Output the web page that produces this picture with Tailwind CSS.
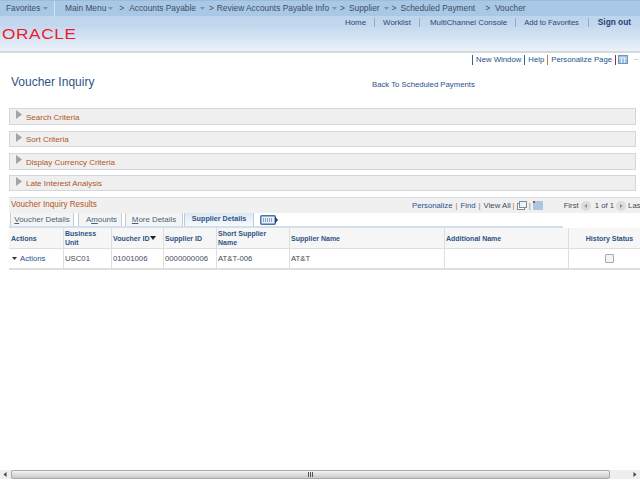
<!DOCTYPE html>
<html lang="en">
<head>
<meta charset="UTF-8" />
<title>Voucher Inquiry</title>
<script src="https://cdn.jsdelivr.net/npm/@tailwindcss/browser@4"></script>
</head>
<body class="w-[640px] h-[480px] overflow-hidden bg-white font-['Liberation_Sans',Arial,sans-serif] text-[7.75px] text-[#3f4a5a]">
<div class="flex flex-col h-[480px] w-[640px] overflow-hidden">

  <!-- header -->
  <header class="h-[53px] shrink-0 border-b-2 border-[#d5d8dd] bg-gradient-to-b from-[#b5cfe9] via-[#c3d8ee] to-[#eaf1f9]">
    <nav class="h-[16px] flex items-center whitespace-nowrap text-[#3d4f66] bg-[#a9c8e6] border-t border-[#9dbcdc] text-[8.35px]">
      <span class="w-[54px] pl-[6px] flex items-center">Favorites<svg width="5" height="3" viewBox="0 0 5 3" class="ml-[3px]"><path d="M0 0H5L2.500 3Z" fill="#7f94ab" /></svg></span>
      <span class="w-[1px] h-[16px] bg-[#d6e4f2]"></span>
      <span class="ml-[10px]">Main Menu</span><svg width="5" height="3" viewBox="0 0 5 3" class="ml-[2px]"><path d="M0 0H5L2.500 3Z" fill="#7f94ab" /></svg>
      <span class="ml-[6px] mr-[5px]">&gt;</span><span>Accounts Payable</span>
      <svg width="5" height="3" viewBox="0 0 5 3" class="ml-[4px]"><path d="M0 0H5L2.500 3Z" fill="#7f94ab" /></svg>
      <span class="ml-[4px] mr-[3px]">&gt;</span><span>Review Accounts Payable Info</span>
      <svg width="5" height="3" viewBox="0 0 5 3" class="ml-[3px]"><path d="M0 0H5L2.500 3Z" fill="#7f94ab" /></svg>
      <span class="ml-[3px] mr-[4px]">&gt;</span><span>Supplier</span>
      <svg width="5" height="3" viewBox="0 0 5 3" class="ml-[4px]"><path d="M0 0H5L2.500 3Z" fill="#7f94ab" /></svg>
      <span class="ml-[3px] mr-[4px]">&gt;</span><span>Scheduled Payment</span>
      <span class="ml-[10px] mr-[5px]">&gt;</span><span>Voucher</span>
    </nav>
    <div class="relative h-[34px]">
      <div class="flex justify-end items-center h-[13px] pr-[9px] text-[#28486f] text-[7.9px]">
        <span>Home</span>
        <span class="w-[1px] h-[9px] bg-[#93a9c0] mx-[8px]"></span>
        <span>Worklist</span>
        <span class="w-[1px] h-[9px] bg-[#93a9c0] ml-[8px] mr-[10px]"></span>
        <span>MultiChannel Console</span>
        <span class="w-[1px] h-[9px] bg-[#93a9c0] mx-[8px]"></span>
        <span class="text-[7.5px]">Add to Favorites</span>
        <span class="w-[1px] h-[9px] bg-[#93a9c0] mx-[9px]"></span>
        <span class="font-bold text-[#1f4273] text-[8.3px]">Sign out</span>
      </div>
      <span class="absolute left-[2px] top-[11px] text-[14px] leading-[14px] tracking-[0.5px] text-[#f0192c] origin-left scale-x-[1.23]">ORACLE</span>
    </div>
  </header>

  <!-- page links -->
  <div class="h-[13px] flex items-center justify-end text-[#27508a] pr-[1px]">
    <span class="w-[1px] h-[10px] bg-[#3f5f95] mr-[3px]"></span><span>New Window</span>
    <span class="w-[1px] h-[10px] bg-[#3f5f95] mx-[3px]"></span><span>Help</span>
    <span class="w-[1px] h-[10px] bg-[#c9762f] mx-[3px]"></span><span>Personalize Page</span>
    <span class="w-[1px] h-[10px] bg-[#8c2f3f] ml-[3px] mr-[2px]"></span>
    <svg width="10" height="9" viewBox="0 0 10 9"><rect x="0.5" y="0.5" width="9" height="8" fill="#9fc0e2" stroke="#6f95bf" /><path d="M1 3H9M3.500 3V8M6.500 3V8" stroke="#e8f1fa" /></svg>
    <span class="w-[5px] h-[1px] bg-[#d8d8d8] ml-[6px]"></span>
  </div>

  <!-- title row -->
  <div class="relative h-[42px] shrink-0">
    <h1 class="absolute left-[11px] top-[9px] text-[12px] leading-[14px] text-[#2f5482]">Voucher Inquiry</h1>
    <a class="absolute left-[372px] top-[13px] text-[#27508a]">Back To Scheduled Payments</a>
  </div>

  <!-- collapsed sections -->
  <div class="ml-[9px] w-[627px] flex flex-col text-[8px] text-[#b0551f]">
    <div class="h-[17px] flex items-center bg-[#efefef] border border-[#d4d7da]"><svg width="6" height="9" viewBox="0 0 6 9" class="ml-[6px] mr-[4px] -mt-[4px]"><path d="M0 0L6 4.500L0 9Z" fill="#a3a3a3" /></svg><span class="pt-[2px]">Search Criteria</span></div>
    <div class="h-[16px] mt-[6px] flex items-center bg-[#efefef] border border-[#d4d7da]"><svg width="6" height="9" viewBox="0 0 6 9" class="ml-[6px] mr-[4px] -mt-[4px]"><path d="M0 0L6 4.500L0 9Z" fill="#a3a3a3" /></svg><span class="pt-[1px]">Sort Criteria</span></div>
    <div class="h-[17px] mt-[6px] flex items-center bg-[#efefef] border border-[#d4d7da]"><svg width="6" height="9" viewBox="0 0 6 9" class="ml-[6px] mr-[4px] -mt-[4px]"><path d="M0 0L6 4.500L0 9Z" fill="#a3a3a3" /></svg><span class="pt-[2px]">Display Currency Criteria</span></div>
    <div class="h-[16px] mt-[5px] flex items-center bg-[#efefef] border border-[#d4d7da]"><svg width="6" height="9" viewBox="0 0 6 9" class="ml-[6px] mr-[4px] -mt-[4px]"><path d="M0 0L6 4.500L0 9Z" fill="#a3a3a3" /></svg><span class="pt-[2px]">Late Interest Analysis</span></div>
  </div>

  <!-- results grid -->
  <section class="ml-[9px] mt-[6px] w-[660px] shrink-0">
    <div class="relative h-[16px] flex items-center bg-[#f0f0f0] border-t border-[#dcdfe2] whitespace-nowrap">
      <span class="ml-[2px] w-[401px] text-[#b0551f] text-[8.15px]">Voucher Inquiry Results</span>
      <span class="text-[#27508a]">Personalize</span>
      <span class="mx-[3px] text-[#c9762f]">|</span>
      <span class="text-[#27508a]">Find</span>
      <span class="mx-[3px] text-[#7a8794]">|</span>
      <span>View All</span>
      <span class="mx-[2px] text-[#c9762f]">|</span>
      <svg width="10" height="9" viewBox="0 0 10 9"><rect x="0.5" y="2.500" width="7" height="6" fill="#fff" stroke="#7f8c9a" /><rect x="2.500" y="0.500" width="7" height="6" fill="#eef3f8" stroke="#7f8c9a" /></svg>
      <span class="mx-[2px] text-[#7a8794]">|</span>
      <svg width="10" height="9" viewBox="0 0 10 9"><rect width="10" height="9" fill="#a9c6e3" /><rect width="2" height="2" fill="#d8343f" /></svg>
      <span class="ml-[21px]">First</span>
      <svg width="10" height="10" viewBox="0 0 10 10" class="ml-[2px] mr-[4px] shrink-0"><circle cx="5" cy="5" r="5" fill="#dcdcdc" /><path d="M6 3L3.500 5L6 7Z" fill="#8a8a8a" /></svg>
      <span>1 of 1</span>
      <svg width="10" height="10" viewBox="0 0 10 10" class="ml-[2px] mr-[2px] shrink-0"><circle cx="5" cy="5" r="5" fill="#dcdcdc" /><path d="M4 3L6.500 5L4 7Z" fill="#8a8a8a" /></svg>
      <span>Last</span>
    </div>

    <div class="h-[15px] flex items-end w-[554px] border-b-2 border-[#d3e0ec] text-[7.9px] text-[#4a5f78] whitespace-nowrap">
      <span class="h-[14px] w-[64px] ml-[1px] flex items-center justify-center border-t border-l border-r border-[#c5ccd4] bg-[#f4f4f4]"><span><u>V</u>oucher Details</span></span>
      <span class="h-[14px] w-[44px] ml-[4px] pl-[3px] flex items-center justify-center border-t border-l border-r border-[#c5ccd4] bg-[#f4f4f4]"><span>A<u>m</u>ounts</span></span>
      <span class="h-[14px] w-[58px] ml-[3px] flex items-center justify-center border-t border-l border-r border-[#c5ccd4] bg-[#f4f4f4]"><span><u>M</u>ore Details</span></span>
      <span class="h-[15px] w-[70px] ml-[1px] flex items-center justify-center border-t border-l border-r border-[#b4cbe2] bg-gradient-to-b from-[#d9e6f3] to-[#f8fafc] font-bold text-[7.2px] text-[#2f5482]">Supplier Details</span>
      <svg width="18" height="10" viewBox="0 0 18 10" class="ml-[6px] mb-[1px]"><rect x="0.750" y="0.750" width="14.500" height="8.500" rx="1" fill="#e8eff8" stroke="#4f72a8" stroke-width="1.500" /><path d="M3 4H13M3 6H13" stroke="#33588f" stroke-dasharray="1 1" /><path d="M15 1.500L18 5L15 8.500Z" fill="#1f3f73" /></svg>
    </div>

    <div class="grid grid-cols-[54px_48px_52px_53px_73px_155px_124px_82px] border-b-2 border-[#dedede] whitespace-nowrap">
      <div class="h-[21px] flex items-center pl-[2px] bg-[#f6f6f6] border-b border-[#dedede] font-bold text-[#2f5482] text-[7px] leading-[9px]">Actions</div>
      <div class="h-[21px] flex items-center pl-[1px] bg-[#f6f6f6] border-b border-l border-[#dedede] font-bold text-[#2f5482] text-[7px] leading-[9px]">Business<br />Unit</div>
      <div class="h-[21px] flex items-center pl-[1px] bg-[#f6f6f6] border-b border-l border-[#dedede] font-bold text-[#2f5482] text-[7px] leading-[9px]">Voucher ID<svg width="6" height="4" viewBox="0 0 6 4" class="ml-[1px]"><path d="M0 0H6L3 4Z" fill="#222" /></svg></div>
      <div class="h-[21px] flex items-center pl-[1px] bg-[#f6f6f6] border-b border-l border-[#dedede] font-bold text-[#2f5482] text-[7px] leading-[9px]">Supplier ID</div>
      <div class="h-[21px] flex items-center pl-[1px] bg-[#f6f6f6] border-b border-l border-[#dedede] font-bold text-[#2f5482] text-[7px] leading-[9px]">Short Supplier<br />Name</div>
      <div class="h-[21px] flex items-center pl-[1px] bg-[#f6f6f6] border-b border-l border-[#dedede] font-bold text-[#2f5482] text-[7px] leading-[9px]">Supplier Name</div>
      <div class="h-[21px] flex items-center pl-[1px] bg-[#f6f6f6] border-b border-l border-[#dedede] font-bold text-[#2f5482] text-[7px] leading-[9px]">Additional Name</div>
      <div class="h-[21px] flex items-center justify-center bg-[#f6f6f6] border-b border-l border-[#dedede] font-bold text-[#2f5482] text-[7px] leading-[9px]">History Status</div>

      <div class="h-[19px] flex items-center pl-[3px]"><svg width="5" height="3" viewBox="0 0 5 3" class="mr-[3px]"><path d="M0 0H5L2.500 3Z" fill="#333" /></svg><span class="text-[#27508a]">Actions</span></div>
      <div class="h-[19px] flex items-center pl-[1px] border-l border-[#dedede]">USC01</div>
      <div class="h-[19px] flex items-center pl-[1px] border-l border-[#dedede]">01001006</div>
      <div class="h-[19px] flex items-center pl-[1px] border-l border-[#dedede]">0000000006</div>
      <div class="h-[19px] flex items-center pl-[1px] border-l border-[#dedede]">AT&amp;T-006</div>
      <div class="h-[19px] flex items-center pl-[1px] border-l border-[#dedede]">AT&amp;T</div>
      <div class="h-[19px] border-l border-[#dedede]"></div>
      <div class="h-[19px] flex items-center justify-center border-l border-[#dedede]"><span class="w-[9px] h-[9px] border border-[#a9a9a9] bg-[#f4f4f4] rounded-[1px]"></span></div>
    </div>
  </section>

  <div class="grow"></div>

  <!-- horizontal scrollbar -->
  <div class="h-[9px] mb-[1px] shrink-0 flex items-center bg-[#eeeeee]">
    <svg width="11" height="9" viewBox="0 0 11 9"><path d="M6.500 2L3.500 4.500L6.500 7Z" fill="#444" /></svg>
    <div class="w-[599px] h-[9px] flex items-center justify-center border border-[#a8a8a8] rounded-[2px] bg-gradient-to-b from-[#f4f4f4] to-[#c9c9c9]">
      <span class="w-[1px] h-[5px] bg-[#555]"></span><span class="w-[1px] h-[5px] bg-[#555] ml-[1px]"></span><span class="w-[1px] h-[5px] bg-[#555] ml-[1px]"></span>
    </div>
    <div class="grow"></div>
    <svg width="11" height="9" viewBox="0 0 11 9"><path d="M4.500 2L7.500 4.500L4.500 7Z" fill="#444" /></svg>
  </div>
</div>
</body>
</html>
